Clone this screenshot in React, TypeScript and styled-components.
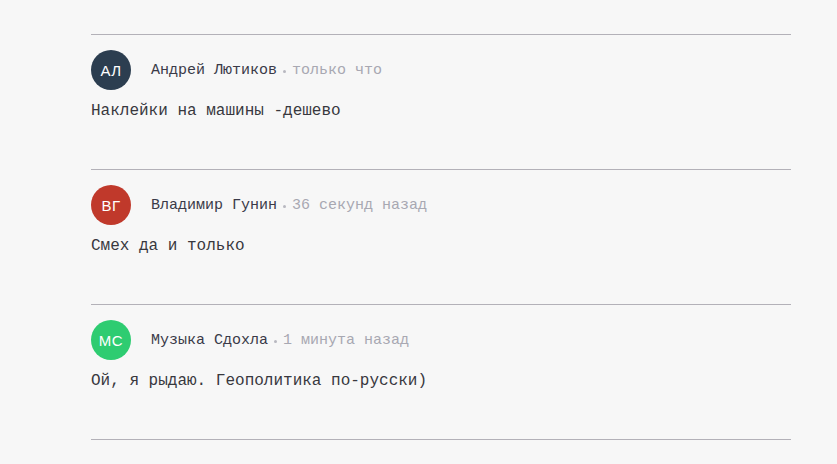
import React from "react";
import styled, { createGlobalStyle } from "styled-components";

const Global = createGlobalStyle`
  html, body { margin: 0; padding: 0; background: #f7f7f7; }
  body { font-family: "Liberation Mono", "DejaVu Sans Mono", monospace; }
`;

const Page = styled.div`
  padding: 34px 46px 0 91px;
`;

const List = styled.div`
  display: flex;
  flex-direction: column;
  border-bottom: 1px solid #b3b1b8;
`;

const Comment = styled.div`
  border-top: 1px solid #b3b1b8;
  padding: 15px 0 0 0;
  height: 135px;
  flex-shrink: 0;
  box-sizing: border-box;
  display: flex;
  flex-direction: column;
`;

const Header = styled.div`
  display: flex;
  align-items: center;
  gap: 20px;
  height: 40px;
`;

const Avatar = styled.div<{ $bg: string }>`
  width: 40px;
  height: 40px;
  border-radius: 50%;
  background: ${(p) => p.$bg};
  color: #fff;
  display: flex;
  align-items: center;
  justify-content: center;
  font-family: "Liberation Sans", Arial, sans-serif;
  font-size: 15px;
  letter-spacing: 0.5px;
`;

const Meta = styled.div`
  display: flex;
  align-items: center;
  font-size: 15px;
`;

const Name = styled.span`
  color: #3a3a48;
`;

const Dot = styled.span`
  width: 3px;
  height: 3px;
  border-radius: 50%;
  background: #b8b8c0;
  margin: 2px 6px 0 6px;
`;

const Time = styled.span`
  color: #a8a8b2;
`;

const Text = styled.div`
  margin-top: 10px;
  font-size: 16px;
  line-height: 22px;
  color: #38383e;
`;

const comments = [
  { initials: "АЛ", bg: "#2c3e50", name: "Андрей Лютиков", time: "только что", text: "Наклейки на машины -дешево" },
  { initials: "ВГ", bg: "#c0392b", name: "Владимир Гунин", time: "36 секунд назад", text: "Смех да и только" },
  { initials: "МС", bg: "#2ecc71", name: "Музыка Сдохла", time: "1 минута назад", text: "Ой, я рыдаю. Геополитика по-русски)" },
];

export default function App() {
  return (
    <>
      <Global />
      <Page>
        <List>
          {comments.map((c) => (
            <Comment key={c.name}>
              <Header>
                <Avatar $bg={c.bg}>{c.initials}</Avatar>
                <Meta>
                  <Name>{c.name}</Name>
                  <Dot />
                  <Time>{c.time}</Time>
                </Meta>
              </Header>
              <Text>{c.text}</Text>
            </Comment>
          ))}
        </List>
      </Page>
    </>
  );
}
